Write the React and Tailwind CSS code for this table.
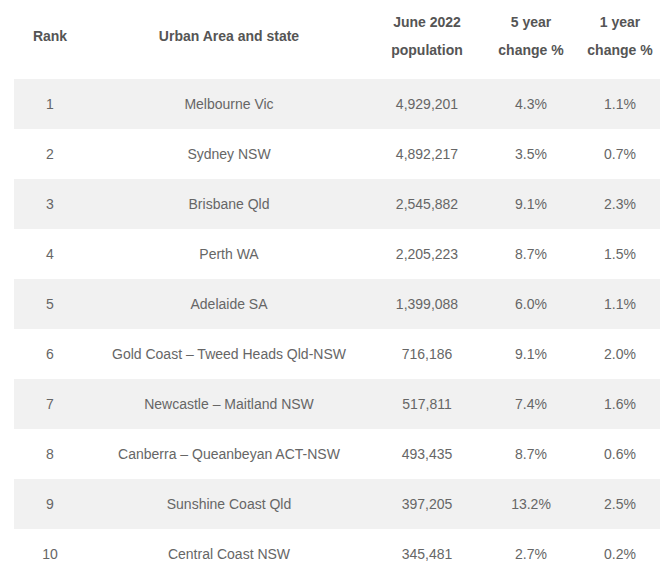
import React from "react";

const rows = [
  ["1", "Melbourne Vic", "4,929,201", "4.3%", "1.1%"],
  ["2", "Sydney NSW", "4,892,217", "3.5%", "0.7%"],
  ["3", "Brisbane Qld", "2,545,882", "9.1%", "2.3%"],
  ["4", "Perth WA", "2,205,223", "8.7%", "1.5%"],
  ["5", "Adelaide SA", "1,399,088", "6.0%", "1.1%"],
  ["6", "Gold Coast – Tweed Heads Qld-NSW", "716,186", "9.1%", "2.0%"],
  ["7", "Newcastle – Maitland NSW", "517,811", "7.4%", "1.6%"],
  ["8", "Canberra – Queanbeyan ACT-NSW", "493,435", "8.7%", "0.6%"],
  ["9", "Sunshine Coast Qld", "397,205", "13.2%", "2.5%"],
  ["10", "Central Coast NSW", "345,481", "2.7%", "0.2%"],
];

const App = () => {
  return (
    <div className="bg-white w-[660px] h-[575px] overflow-hidden pl-[14px] font-['Liberation_Sans',Arial,sans-serif]">
      <table className="table-fixed border-collapse w-[646px]">
        <colgroup>
          <col className="w-[72px]" />
          <col className="w-[286px]" />
          <col className="w-[110px]" />
          <col className="w-[98px]" />
          <col className="w-[80px]" />
        </colgroup>
        {/* header */}
        <thead>
          <tr className="h-[79px] text-[14px] font-bold text-[#555555] leading-[28px]">
            <th className="text-center align-middle pb-[7px]">Rank</th>
            <th className="text-center align-middle pb-[7px]">Urban Area and state</th>
            <th className="text-center align-middle pb-[7px]">
              June 2022
              <br />
              population
            </th>
            <th className="text-center align-middle pb-[7px]">
              5 year
              <br />
              change %
            </th>
            <th className="text-center align-middle pb-[7px]">
              1 year
              <br />
              change %
            </th>
          </tr>
        </thead>
        <tbody>
          {rows.map((r, i) => (
            <tr
              key={r[0]}
              className={
                "h-[50px] text-[14px] text-[#666666] " +
                (i % 2 === 0 ? "bg-[#f1f1f1]" : "bg-white")
              }
            >
              {r.map((c, j) => (
                <td key={j} className="text-center align-middle">
                  {c}
                </td>
              ))}
            </tr>
          ))}
        </tbody>
      </table>
    </div>
  );
};

export default App;
